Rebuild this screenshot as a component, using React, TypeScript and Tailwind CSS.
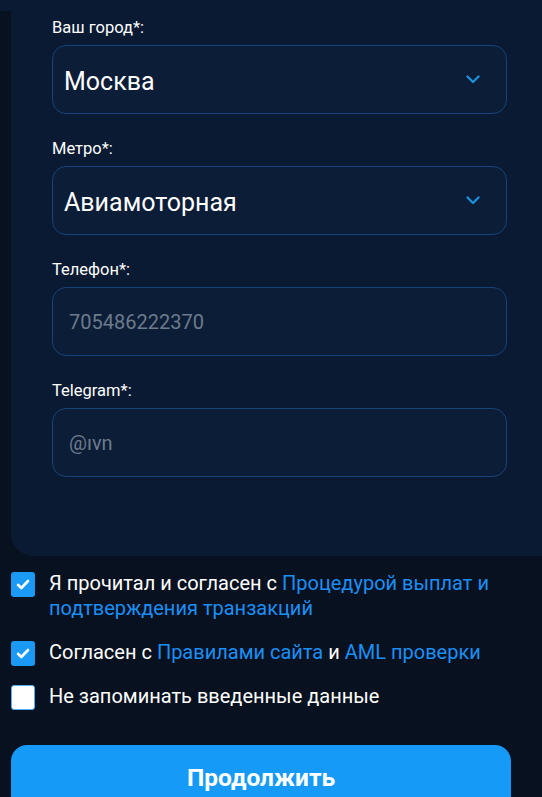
import React from 'react';

const fields = [
  { label: 'Ваш город*:', value: 'Москва', select: true },
  { label: 'Метро*:', value: 'Авиамоторная', select: true },
  { label: 'Телефон*:', value: '705486222370', select: false },
  { label: 'Telegram*:', value: '@ıvn', select: false },
];

const Chevron = () => (
  <svg width="14" height="9" viewBox="0 0 14 9" fill="none">
    <path d="M1.5 1.5L7 7L12.5 1.5" stroke="#1d8fd9" strokeWidth="2.4" strokeLinecap="round" strokeLinejoin="round" />
  </svg>
);

const Check = ({ checked }: { checked: boolean }) =>
  checked ? (
    <span className="mt-[1px] flex h-[25px] w-[24px] shrink-0 items-center justify-center rounded-[3px] bg-[#1a9af5]">
      <svg width="14" height="11" viewBox="0 0 14 11" fill="none">
        <path d="M2 5.8L5.3 9L12 2" stroke="#fff" strokeWidth="2.6" strokeLinecap="round" strokeLinejoin="round" />
      </svg>
    </span>
  ) : (
    <span className="mt-[1px] h-[25px] w-[24px] shrink-0 rounded-[3px] border border-[#4fb0f5] bg-white" />
  );

export default function App() {
  return (
    <div className="min-h-screen overflow-hidden bg-[#07111f] font-['Roboto',sans-serif]">
      <div className="h-[11px] bg-[#0a1a33]" />

      {/* form card */}
      <div className="ml-[11px] flex flex-col gap-[26px] rounded-bl-[22px] bg-[#0a1a33] pb-[79px] pl-[41px] pr-[35px] pt-[8px]">
        {fields.map((f) => (
          <div key={f.label}>
            <div className="mb-[8px] text-[16.5px] leading-[18px] text-white">{f.label}</div>
            <div className="flex h-[69px] items-center justify-between rounded-[14px] border border-[#174478] bg-[#0b1d37] pl-[11px] pr-[26px]">
              {f.select ? (
                <>
                  <span className="pt-[4px] text-[25px] text-white">{f.value}</span>
                  <Chevron />
                </>
              ) : (
                <span className="pl-[5px] text-[20px] text-[#6d7b8d]">{f.value}</span>
              )}
            </div>
          </div>
        ))}
      </div>

      {/* agreements */}
      <div className="px-[11px] pt-[15px] text-[20px] leading-[25px] text-white">
        <div className="flex items-start gap-[14px]">
          <Check checked />
          <p>
            Я прочитал и согласен с{' '}
            <span className="text-[#1c8ff5]">Процедурой выплат и подтверждения транзакций</span>
          </p>
        </div>
        <div className="mt-[19px] flex items-start gap-[14px]">
          <Check checked />
          <p>
            Согласен с <span className="text-[#1c8ff5]">Правилами сайта</span> и{' '}
            <span className="text-[#1c8ff5]">AML проверки</span>
          </p>
        </div>
        <div className="mt-[18px] flex items-start gap-[14px]">
          <Check checked={false} />
          <p>Не запоминать введенные данные</p>
        </div>

        <button
          type="button"
          className="mt-[35px] flex h-[68px] w-[500px] items-center justify-center rounded-[16px] bg-[#169af7] pb-[4px] text-[24.5px] font-bold text-white"
        >
          Продолжить
        </button>
      </div>
    </div>
  );
}
